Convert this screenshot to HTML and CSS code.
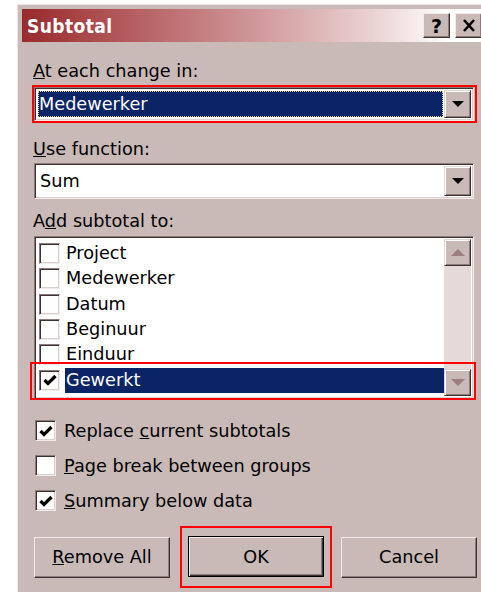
FILE: index.html
```html
<!DOCTYPE html>
<html>
<head>
<meta charset="utf-8">
<link rel="stylesheet" href="styles.css">
</head>
<body>
<div class="window">
  <div class="titlebar">
    <span class="title">Subtotal</span>
    <div class="tbtns">
      <span class="tbtn">?</span>
      <span class="tbtn">
        <svg width="14" height="13" viewBox="0 0 14 13"><path d="M2 1 L12 12 M12 1 L2 12" stroke="#000" stroke-width="2.6"/></svg>
      </span>
    </div>
  </div>
  <div class="content">
    <div class="lbl lbl-first"><u>A</u>t each change in:</div>
    <div class="mark mark-combo">
      <div class="combo">
        <div class="field"><span class="focus">Medewerker</span></div>
        <div class="dd"><svg width="12" height="7" viewBox="0 0 12 7"><path d="M0 0 H12 L6 6 Z" fill="#000"/></svg></div>
      </div>
    </div>
    <div class="lbl lbl-second"><u>U</u>se function:</div>
    <div class="combo combo-plain">
      <div class="field"><span class="val">Sum</span></div>
      <div class="dd"><svg width="12" height="7" viewBox="0 0 12 7"><path d="M0 0 H12 L6 6 Z" fill="#000"/></svg></div>
    </div>
    <div class="lbl lbl-third">A<u>d</u>d subtotal to:</div>
    <div class="listwrap">
      <div class="list">
        <div class="rows">
          <div class="row"><span class="cb"></span><span class="txt">Project</span></div>
          <div class="row"><span class="cb"></span><span class="txt">Medewerker</span></div>
          <div class="row"><span class="cb"></span><span class="txt">Datum</span></div>
          <div class="row"><span class="cb"></span><span class="txt">Beginuur</span></div>
          <div class="row"><span class="cb"></span><span class="txt">Einduur</span></div>
          <div class="row row-sel"><span class="cb"><svg width="14" height="12" viewBox="0 0 14 12"><path d="M1.5 6 L5 9.5 L12.5 2" stroke="#000" stroke-width="3.2" fill="none"/></svg></span><span class="txt">Gewerkt</span></div>
        </div>
        <div class="sbar">
          <div class="sbtn"><svg width="14" height="8" viewBox="0 0 14 8"><path d="M7 0 L14 7 H0 Z" fill="#9b7e7e"/></svg></div>
          <div class="strack"></div>
          <div class="sbtn"><svg width="14" height="8" viewBox="0 0 14 8"><path d="M0 0 H14 L7 7 Z" fill="#9b7e7e"/></svg></div>
        </div>
      </div>
      <div class="mark mark-row"></div>
    </div>
    <div class="opts">
      <div class="opt"><span class="cb"><svg width="14" height="12" viewBox="0 0 14 12"><path d="M1.5 6 L5 9.5 L12.5 2" stroke="#000" stroke-width="3.2" fill="none"/></svg></span><span>Replace <u>c</u>urrent subtotals</span></div>
      <div class="opt"><span class="cb"></span><span><u>P</u>age break between groups</span></div>
      <div class="opt"><span class="cb"><svg width="14" height="12" viewBox="0 0 14 12"><path d="M1.5 6 L5 9.5 L12.5 2" stroke="#000" stroke-width="3.2" fill="none"/></svg></span><span><u>S</u>ummary below data</span></div>
    </div>
    <div class="buttons">
      <div class="btn"><span><u>R</u>emove All</span></div>
      <div class="okwrap"><div class="btn btn-default"><span>OK</span></div></div>
      <div class="btn"><span>Cancel</span></div>
    </div>
  </div>
</div>
</body>
</html>
```
FILE: styles.css
```css
* { box-sizing: border-box; }

html, body {
  margin: 0;
  background: #ffffff;
  overflow: hidden;
}

body {
  font-family: "DejaVu Sans", sans-serif;
  font-size: 17.7px;
  color: #000;
}

.window {
  margin: 4px 0 0 17px;
  width: 470px;
  height: 600px;
  background: #c9b9b7;
  border-top: 1px solid #eee5e4;
  border-left: 1px solid #eee5e4;
  padding: 4px 0 0 4px;
}

/* caption bar */
.titlebar {
  height: 33px;
  display: flex;
  align-items: center;
  justify-content: space-between;
  background: linear-gradient(90deg, #982a2c 0%, #b35a5c 22%, #cf9799 50%, #ead1d1 75%, #ffffff 92%);
  padding-left: 5px;
}

.title {
  color: #fff;
  font-weight: bold;
  font-size: 19px;
  font-family: "DejaVu Sans Condensed", "DejaVu Sans", sans-serif;
  letter-spacing: 0.4px;
}

.tbtns {
  display: flex;
  gap: 5px;
  margin-right: 5px;
}

.tbtn {
  width: 27px;
  height: 25px;
  display: flex;
  align-items: center;
  justify-content: center;
  background: #c9b9b7;
  font-weight: bold;
  font-size: 19px;
  border-top: 1px solid #f2eaea;
  border-left: 1px solid #f2eaea;
  border-right: 1px solid #3c3232;
  border-bottom: 1px solid #3c3232;
  box-shadow: inset -1px -1px 0 #8c7b7a;
}

.content {
  padding-left: 12px;
}

.lbl {
  height: 20px;
  line-height: 20px;
  margin-left: -1px;
}

.lbl-first { margin-top: 19px; }
.lbl-second { margin-top: 16px; }
.lbl-third { margin-top: 12px; }

/* red annotation frames */
.mark {
  border: 2px solid #ff0000;
}

.mark-combo {
  width: 445px;
  margin: 4px 0 0 -2px;
}

/* combo boxes */
.combo {
  width: 440px;
  height: 34px;
  display: flex;
  background: #fff;
  border-top: 1px solid #8c7b7a;
  border-left: 1px solid #8c7b7a;
  border-right: 1px solid #f2eaea;
  border-bottom: 1px solid #f2eaea;
  box-shadow: inset 1px 1px 0 #3c3232, inset -1px -1px 0 #dcd0cf;
  padding: 2px;
}

.combo-plain {
  height: 36px;
  margin-top: 4px;
}

.field {
  flex: 1;
  display: flex;
  align-items: stretch;
  padding: 1px;
}

.focus {
  flex: 1;
  background: #0a2466;
  color: #fff;
  outline: 1px dotted #e8d48a;
  outline-offset: -1px;
  padding-left: 1px;
  line-height: 26px;
}

.val {
  padding-left: 2px;
  line-height: 28px;
}

.dd {
  width: 27px;
  display: flex;
  align-items: center;
  justify-content: center;
  background: #c9b9b7;
  border-top: 1px solid #e2d6d5;
  border-left: 1px solid #e2d6d5;
  border-right: 1px solid #3c3232;
  border-bottom: 1px solid #3c3232;
  box-shadow: inset 1px 1px 0 #ffffff, inset -1px -1px 0 #8c7b7a;
}

/* list of columns */
.listwrap {
  position: relative;
  margin-top: 5px;
  width: 440px;
}

.list {
  height: 163px;
  display: flex;
  background: #fff;
  border-top: 1px solid #8c7b7a;
  border-left: 1px solid #8c7b7a;
  border-right: 1px solid #f2eaea;
  border-bottom: 1px solid #f2eaea;
  box-shadow: inset 1px 1px 0 #3c3232, inset -1px -1px 0 #dcd0cf;
  padding: 2px;
  overflow: hidden;
}

.rows {
  flex: 1;
  padding-top: 2px;
}

.row {
  height: 25.3px;
  display: flex;
  align-items: center;
  gap: 5px;
  padding-left: 2px;
}

.row .txt {
  line-height: 25px;
  padding-left: 1px;
}

.row-sel .txt {
  flex: 1;
  background: #0a2466;
  color: #fff;
  height: 25px;
}

.cb {
  width: 21px;
  height: 21px;
  flex: none;
  display: flex;
  align-items: center;
  justify-content: center;
  background: #fff;
  border-top: 1px solid #8c7b7a;
  border-left: 1px solid #8c7b7a;
  border-right: 1px solid #f2eaea;
  border-bottom: 1px solid #f2eaea;
  box-shadow: inset 1px 1px 0 #3c3232, inset -1px -1px 0 #dcd0cf;
}

.sbar {
  width: 27px;
  display: flex;
  flex-direction: column;
  background: #e6dad9;
}

.strack { flex: 1; }

.sbtn {
  height: 27px;
  display: flex;
  align-items: center;
  justify-content: center;
  background: #c9b9b7;
  border-top: 1px solid #e2d6d5;
  border-left: 1px solid #e2d6d5;
  border-right: 1px solid #3c3232;
  border-bottom: 1px solid #3c3232;
  box-shadow: inset 1px 1px 0 #ffffff, inset -1px -1px 0 #8c7b7a;
}

.mark-row {
  position: absolute;
  left: -4px;
  right: -2px;
  top: 126px;
  height: 38px;
}

/* option checkboxes */
.opts {
  margin-top: 21px;
  display: flex;
  flex-direction: column;
  gap: 14px;
}

.opt {
  display: flex;
  align-items: center;
  gap: 8px;
  height: 21px;
  margin-left: 1px;
}

/* push buttons */
.buttons {
  margin-top: 15px;
  display: flex;
  align-items: center;
  width: 441px;
}

.btn {
  width: 136px;
  height: 41px;
  flex: none;
  display: flex;
  align-items: center;
  justify-content: center;
  background: #c9b9b7;
  border-top: 1px solid #f2eaea;
  border-left: 1px solid #f2eaea;
  border-right: 1px solid #3c3232;
  border-bottom: 1px solid #3c3232;
  box-shadow: inset -1px -1px 0 #8c7b7a;
}

.okwrap {
  flex: none;
  width: 152px;
  height: 62px;
  border: 2px solid #ff0000;
  padding: 8px 6px 9px 6px;
  margin: 0 9px 0 10px;
}

.btn-default {
  border: 1px solid #000;
  box-shadow: inset 1px 1px 0 #f2eaea, inset -1px -1px 0 #3c3232, inset -2px -2px 0 #8c7b7a;
}
```
